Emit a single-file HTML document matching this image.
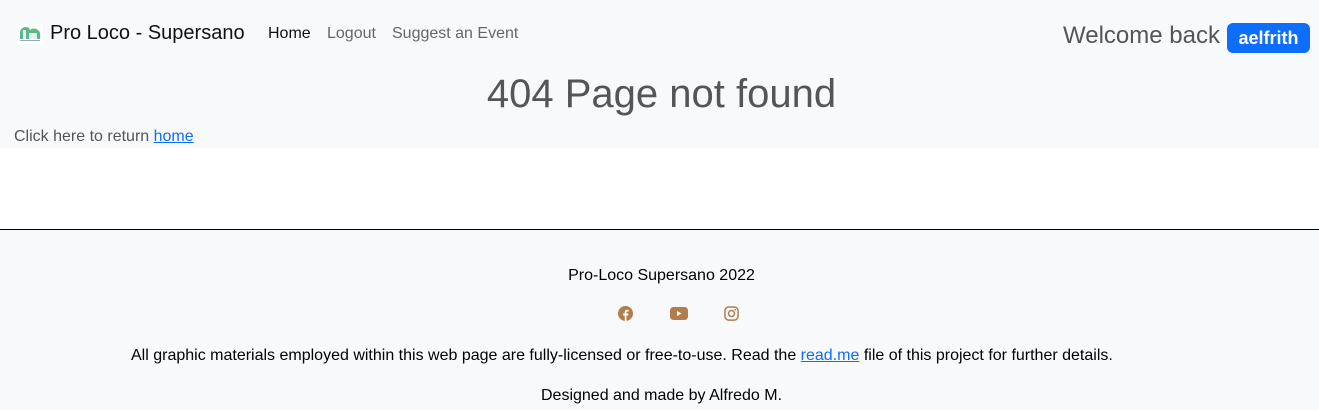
<!DOCTYPE html>
<html><head><meta charset="utf-8"><style>
*{margin:0;padding:0;box-sizing:border-box}
body{width:1319px;height:410px;position:relative;font-family:"Liberation Sans",Arial,sans-serif;background:#fff;overflow:hidden}
.top{position:absolute;left:0;top:0;width:1319px;height:148px;background:#f8f9fa}
.a{position:absolute;white-space:nowrap}
.foot{position:absolute;left:0;top:229px;width:1319px;height:181px;background:#f8f9fa;border-top:1px solid #000}
a{color:#0d6efd;text-decoration:underline}
</style></head><body>
<div class="top"></div>
<svg class="a" style="left:17px;top:24px" width="26" height="20" viewBox="0 0 26 20">
<rect width="26" height="20" fill="#fff"/>
<path d="M3 15 V8 Q4 3 9 3 Q12 3 13 6 Q17 3 21 6 Q24 8 23 15Z" fill="#5cb88a"/>
<rect x="6" y="6" width="3" height="9" fill="#e8f4f0"/>
<rect x="12" y="9" width="8" height="6" fill="#e8f4f0"/>
<rect x="3" y="16" width="20" height="1" fill="#9ab"/>
</svg>
<div class="a" style="left:50px;top:22px;font-size:20px;color:#111">Pro Loco - Supersano</div>
<div class="a" style="left:268px;top:25px;font-size:16px;color:#111">Home</div>
<div class="a" style="left:327px;top:25px;font-size:16px;color:#666">Logout</div>
<div class="a" style="left:392px;top:25px;font-size:16px;color:#666">Suggest an Event</div>
<div class="a" style="left:1063px;top:22px;font-size:24px;color:#555">Welcome back</div>
<div class="a" style="left:1227px;top:23px;width:83px;height:30px;background:#0d6efd;border-radius:6px;color:#fff;font-weight:bold;font-size:18px;text-align:center;line-height:30px">aelfrith</div>
<div class="a" style="left:2px;width:1319px;text-align:center;top:72px;font-size:40px;color:#555">404 Page not found</div>
<div class="a" style="left:14px;top:128px;font-size:16px;color:#555">Click here to return <a>home</a></div>
<div class="foot"></div>
<div class="a" style="left:2px;width:1319px;text-align:center;top:267px;font-size:16px;color:#000">Pro-Loco Supersano 2022</div>
<svg class="a" style="left:618px;top:306px" width="15" height="15" viewBox="0 0 16 16"><circle cx="8" cy="8" r="8" fill="#b07d4f"/><path d="M9 16V10h2l.3-2H9V6.8c0-.6.3-1 1-1h1.4V4.1C11 4 10.4 4 9.8 4 8.3 4 7.2 5 7.2 6.6V8H5.5v2h1.7v6Z" fill="#fff"/></svg>
<svg class="a" style="left:670px;top:307px" width="18" height="13" viewBox="0 0 18 13"><rect width="18" height="13" rx="3.5" fill="#b07d4f"/><path d="M7 4v5l4.5-2.5Z" fill="#fff"/></svg>
<svg class="a" style="left:724px;top:306px" width="15" height="15" viewBox="0 0 16 16"><rect x="1" y="1" width="14" height="14" rx="4" fill="none" stroke="#b07d4f" stroke-width="1.6"/><circle cx="8" cy="8" r="3.2" fill="none" stroke="#b07d4f" stroke-width="1.6"/><circle cx="12" cy="4" r=".9" fill="#b07d4f"/></svg>
<div class="a" style="left:131px;top:347px;font-size:16px;color:#000">All graphic materials employed within this web page are fully-licensed or free-to-use. Read the <a>read.me</a> file of this project for further details.</div>
<div class="a" style="left:2px;width:1319px;text-align:center;top:387px;font-size:16px;color:#000">Designed and made by Alfredo M.</div>
</body></html>
